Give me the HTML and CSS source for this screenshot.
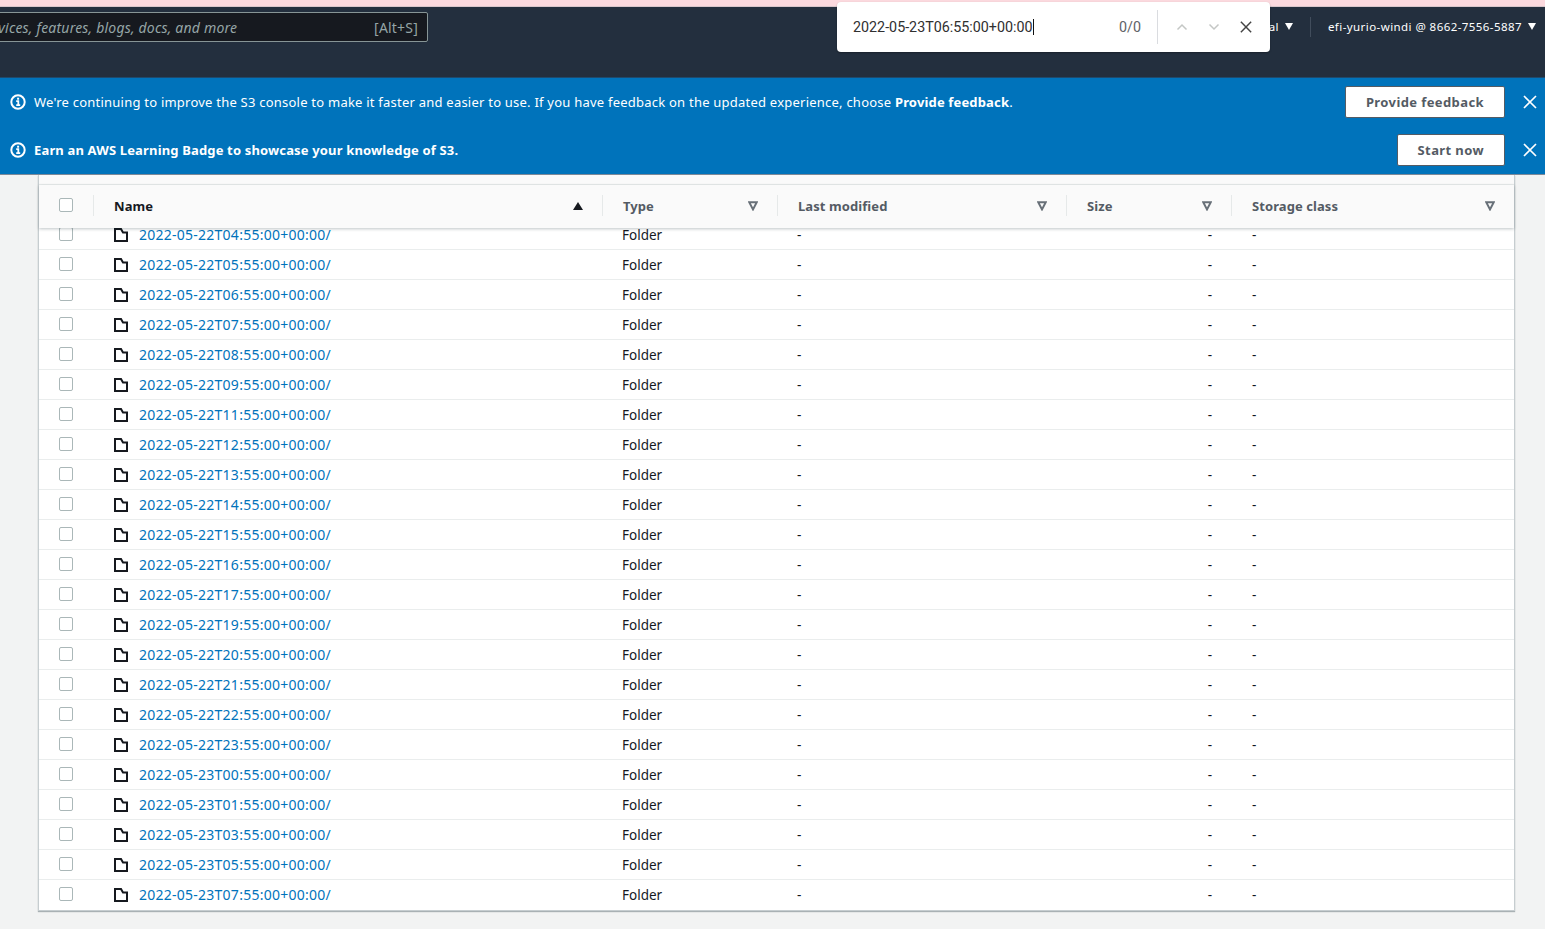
FILE: index.html
```html
<!DOCTYPE html>
<html lang="en">
<head>
<meta charset="utf-8">
<title>S3 bucket</title>
<link rel="stylesheet" href="styles.css">
</head>
<body>
<svg class="defs" width="0" height="0" aria-hidden="true">
  <symbol id="info" viewBox="0 0 16 16"><circle cx="8" cy="8" r="6.7" fill="none" stroke="currentColor" stroke-width="2"/><path d="M6.200 7.200h2.100v3.800M6.200 11.200h4" fill="none" stroke="currentColor" stroke-width="1.800"/><rect x="7.100" y="3.700" width="2" height="2" fill="currentColor"/></symbol>
  <symbol id="close" viewBox="0 0 14 14"><path d="M1 1l12 12M13 1L1 13" fill="none" stroke="currentColor" stroke-width="1.700"/></symbol>
  <symbol id="filter" viewBox="0 0 10 10"><path d="M1.200 1.200h7.600L5 8.400z" fill="none" stroke="currentColor" stroke-width="2"/></symbol>
  <symbol id="folder" viewBox="0 0 14 14"><path d="M1 1h6l2 3.500h4V13H1z" fill="none" stroke="currentColor" stroke-width="2"/></symbol>
</svg>
<div class="strip"></div>
<header class="nav">
  <div class="search"><span class="search-text">Search for services, features, blogs, docs, and more</span><span class="search-key">[Alt+S]</span></div>
  <div class="nav-right">
    <span class="nav-item">Global <i class="caret"></i></span>
    <span class="nav-sep"></span>
    <span class="nav-item">efi-yurio-windi @ 8662-7556-5887 <i class="caret"></i></span>
  </div>
</header>
<div class="findbar">
  <span class="find-input"><span class="find-text">2022-05-23T06:55:00+00:00</span></span>
  <span class="find-count">0/0</span>
  <span class="find-sep"></span>
  <svg class="find-arrow" width="12" height="8" viewBox="0 0 12 8"><path d="M1.500 6.500L6 2l4.500 4.500" fill="none" stroke="currentColor" stroke-width="1.500"/></svg>
  <svg class="find-arrow" width="12" height="8" viewBox="0 0 12 8"><path d="M1.500 1.500L6 6l4.500-4.500" fill="none" stroke="currentColor" stroke-width="1.500"/></svg>
  <svg class="find-close" width="12" height="12"><use href="#close"/></svg>
</div>
<section class="flash">
  <div class="flash-row">
    <svg class="flash-icon" width="16" height="16"><use href="#info"/></svg>
    <p class="flash-text">We're continuing to improve the S3 console to make it faster and easier to use. If you have feedback on the updated experience, choose <b>Provide feedback</b>.</p>
    <button class="flash-btn">Provide feedback</button>
    <svg class="flash-close" width="14" height="14"><use href="#close"/></svg>
  </div>
  <div class="flash-row">
    <svg class="flash-icon" width="16" height="16"><use href="#info"/></svg>
    <p class="flash-text"><b>Earn an AWS Learning Badge to showcase your knowledge of S3.</b></p>
    <button class="flash-btn">Start now</button>
    <svg class="flash-close" width="14" height="14"><use href="#close"/></svg>
  </div>
</section>
<main class="card">
  <div class="card-top"></div>
  <div class="thead cols">
    <div class="th th-check"><span class="box"></span></div>
    <div class="th"><span class="th-name">Name</span><i class="sort"></i></div>
    <div class="th"><span>Type</span><svg class="filter" width="10" height="10"><use href="#filter"/></svg></div>
    <div class="th"><span>Last modified</span><svg class="filter" width="10" height="10"><use href="#filter"/></svg></div>
    <div class="th"><span>Size</span><svg class="filter" width="10" height="10"><use href="#filter"/></svg></div>
    <div class="th th-last"><span>Storage class</span><svg class="filter" width="10" height="10"><use href="#filter"/></svg></div>
  </div>
  <div class="tr cols tr-first"><div class="td-check"><span class="box"></span></div><div class="td-name"><svg class="folder" width="14" height="14"><use href="#folder"/></svg><a class="link">2022-05-22T04:55:00+00:00/</a></div><div class="td">Folder</div><div class="td">-</div><div class="td td-size">-</div><div class="td td-class">-</div></div>
  <div class="tr cols"><div class="td-check"><span class="box"></span></div><div class="td-name"><svg class="folder" width="14" height="14"><use href="#folder"/></svg><a class="link">2022-05-22T05:55:00+00:00/</a></div><div class="td">Folder</div><div class="td">-</div><div class="td td-size">-</div><div class="td td-class">-</div></div>
  <div class="tr cols"><div class="td-check"><span class="box"></span></div><div class="td-name"><svg class="folder" width="14" height="14"><use href="#folder"/></svg><a class="link">2022-05-22T06:55:00+00:00/</a></div><div class="td">Folder</div><div class="td">-</div><div class="td td-size">-</div><div class="td td-class">-</div></div>
  <div class="tr cols"><div class="td-check"><span class="box"></span></div><div class="td-name"><svg class="folder" width="14" height="14"><use href="#folder"/></svg><a class="link">2022-05-22T07:55:00+00:00/</a></div><div class="td">Folder</div><div class="td">-</div><div class="td td-size">-</div><div class="td td-class">-</div></div>
  <div class="tr cols"><div class="td-check"><span class="box"></span></div><div class="td-name"><svg class="folder" width="14" height="14"><use href="#folder"/></svg><a class="link">2022-05-22T08:55:00+00:00/</a></div><div class="td">Folder</div><div class="td">-</div><div class="td td-size">-</div><div class="td td-class">-</div></div>
  <div class="tr cols"><div class="td-check"><span class="box"></span></div><div class="td-name"><svg class="folder" width="14" height="14"><use href="#folder"/></svg><a class="link">2022-05-22T09:55:00+00:00/</a></div><div class="td">Folder</div><div class="td">-</div><div class="td td-size">-</div><div class="td td-class">-</div></div>
  <div class="tr cols"><div class="td-check"><span class="box"></span></div><div class="td-name"><svg class="folder" width="14" height="14"><use href="#folder"/></svg><a class="link">2022-05-22T11:55:00+00:00/</a></div><div class="td">Folder</div><div class="td">-</div><div class="td td-size">-</div><div class="td td-class">-</div></div>
  <div class="tr cols"><div class="td-check"><span class="box"></span></div><div class="td-name"><svg class="folder" width="14" height="14"><use href="#folder"/></svg><a class="link">2022-05-22T12:55:00+00:00/</a></div><div class="td">Folder</div><div class="td">-</div><div class="td td-size">-</div><div class="td td-class">-</div></div>
  <div class="tr cols"><div class="td-check"><span class="box"></span></div><div class="td-name"><svg class="folder" width="14" height="14"><use href="#folder"/></svg><a class="link">2022-05-22T13:55:00+00:00/</a></div><div class="td">Folder</div><div class="td">-</div><div class="td td-size">-</div><div class="td td-class">-</div></div>
  <div class="tr cols"><div class="td-check"><span class="box"></span></div><div class="td-name"><svg class="folder" width="14" height="14"><use href="#folder"/></svg><a class="link">2022-05-22T14:55:00+00:00/</a></div><div class="td">Folder</div><div class="td">-</div><div class="td td-size">-</div><div class="td td-class">-</div></div>
  <div class="tr cols"><div class="td-check"><span class="box"></span></div><div class="td-name"><svg class="folder" width="14" height="14"><use href="#folder"/></svg><a class="link">2022-05-22T15:55:00+00:00/</a></div><div class="td">Folder</div><div class="td">-</div><div class="td td-size">-</div><div class="td td-class">-</div></div>
  <div class="tr cols"><div class="td-check"><span class="box"></span></div><div class="td-name"><svg class="folder" width="14" height="14"><use href="#folder"/></svg><a class="link">2022-05-22T16:55:00+00:00/</a></div><div class="td">Folder</div><div class="td">-</div><div class="td td-size">-</div><div class="td td-class">-</div></div>
  <div class="tr cols"><div class="td-check"><span class="box"></span></div><div class="td-name"><svg class="folder" width="14" height="14"><use href="#folder"/></svg><a class="link">2022-05-22T17:55:00+00:00/</a></div><div class="td">Folder</div><div class="td">-</div><div class="td td-size">-</div><div class="td td-class">-</div></div>
  <div class="tr cols"><div class="td-check"><span class="box"></span></div><div class="td-name"><svg class="folder" width="14" height="14"><use href="#folder"/></svg><a class="link">2022-05-22T19:55:00+00:00/</a></div><div class="td">Folder</div><div class="td">-</div><div class="td td-size">-</div><div class="td td-class">-</div></div>
  <div class="tr cols"><div class="td-check"><span class="box"></span></div><div class="td-name"><svg class="folder" width="14" height="14"><use href="#folder"/></svg><a class="link">2022-05-22T20:55:00+00:00/</a></div><div class="td">Folder</div><div class="td">-</div><div class="td td-size">-</div><div class="td td-class">-</div></div>
  <div class="tr cols"><div class="td-check"><span class="box"></span></div><div class="td-name"><svg class="folder" width="14" height="14"><use href="#folder"/></svg><a class="link">2022-05-22T21:55:00+00:00/</a></div><div class="td">Folder</div><div class="td">-</div><div class="td td-size">-</div><div class="td td-class">-</div></div>
  <div class="tr cols"><div class="td-check"><span class="box"></span></div><div class="td-name"><svg class="folder" width="14" height="14"><use href="#folder"/></svg><a class="link">2022-05-22T22:55:00+00:00/</a></div><div class="td">Folder</div><div class="td">-</div><div class="td td-size">-</div><div class="td td-class">-</div></div>
  <div class="tr cols"><div class="td-check"><span class="box"></span></div><div class="td-name"><svg class="folder" width="14" height="14"><use href="#folder"/></svg><a class="link">2022-05-22T23:55:00+00:00/</a></div><div class="td">Folder</div><div class="td">-</div><div class="td td-size">-</div><div class="td td-class">-</div></div>
  <div class="tr cols"><div class="td-check"><span class="box"></span></div><div class="td-name"><svg class="folder" width="14" height="14"><use href="#folder"/></svg><a class="link">2022-05-23T00:55:00+00:00/</a></div><div class="td">Folder</div><div class="td">-</div><div class="td td-size">-</div><div class="td td-class">-</div></div>
  <div class="tr cols"><div class="td-check"><span class="box"></span></div><div class="td-name"><svg class="folder" width="14" height="14"><use href="#folder"/></svg><a class="link">2022-05-23T01:55:00+00:00/</a></div><div class="td">Folder</div><div class="td">-</div><div class="td td-size">-</div><div class="td td-class">-</div></div>
  <div class="tr cols"><div class="td-check"><span class="box"></span></div><div class="td-name"><svg class="folder" width="14" height="14"><use href="#folder"/></svg><a class="link">2022-05-23T03:55:00+00:00/</a></div><div class="td">Folder</div><div class="td">-</div><div class="td td-size">-</div><div class="td td-class">-</div></div>
  <div class="tr cols"><div class="td-check"><span class="box"></span></div><div class="td-name"><svg class="folder" width="14" height="14"><use href="#folder"/></svg><a class="link">2022-05-23T05:55:00+00:00/</a></div><div class="td">Folder</div><div class="td">-</div><div class="td td-size">-</div><div class="td td-class">-</div></div>
  <div class="tr cols tr-last"><div class="td-check"><span class="box"></span></div><div class="td-name"><svg class="folder" width="14" height="14"><use href="#folder"/></svg><a class="link">2022-05-23T07:55:00+00:00/</a></div><div class="td">Folder</div><div class="td">-</div><div class="td td-size">-</div><div class="td td-class">-</div></div>
</main>
</body>
</html>
```
FILE: styles.css
```css
* { box-sizing: border-box; }
html, body { margin: 0; padding: 0; height: 929px; overflow: hidden; }
body { background: #f2f3f3; font-family: "Noto Sans", sans-serif; font-size: 13px; letter-spacing: .228px; color: #16191f; position: relative; }
.defs { position: absolute; }

.strip { height: 7px; background: #fbd9de; border-bottom: 1px solid #d9c6cb; }

.nav { height: 70px; background: #232f3e; display: flex; align-items: flex-start; justify-content: space-between; overflow: hidden; padding-top: 5px; }
.search { width: 529px; height: 30px; margin-left: -101px; background: #16191f; border: 1px solid #879596; border-radius: 2px; display: flex; align-items: center; justify-content: space-between; padding: 1px 9px 0 10px; color: #95a5a6; font-size: 14px; letter-spacing: .2px; }
.search-text { font-style: italic; white-space: nowrap; }
.nav-right { display: flex; align-items: center; height: 29px; color: #fff; font-size: 11.500px; letter-spacing: .43px; padding-right: 9px; }
.nav-item { white-space: nowrap; display: flex; align-items: center; gap: 6px; }
.nav-sep { width: 1px; height: 20px; background: #414d5c; margin: 0 17px; }
.caret { display: inline-block; width: 0; height: 0; border-left: 4px solid transparent; border-right: 4px solid transparent; border-top: 7px solid #fff; }

.findbar { position: absolute; left: 837px; top: 2px; width: 433px; height: 50px; background: #fff; border-radius: 4px; box-shadow: 0 1px 2px rgba(0,0,0,.3); display: flex; align-items: center; padding: 0 18px 0 16px; font-family: Roboto, sans-serif; font-size: 14.300px; letter-spacing: 0; color: #303030; }
.find-input { width: 266px; white-space: nowrap; }
.find-text { border-right: 1px solid #111; }
.find-count { color: #5f6368; width: 38px; }
.find-sep { width: 1px; height: 34px; background: #dadce0; margin: 0 18px 0 0; }
.find-arrow { color: #c4c7c5; margin-right: 20px; }
.find-close { color: #444; }

.flash { height: 98px; background: #0073bb; border-top: 1px solid #1f4a6d; border-bottom: 1px solid #7d8998; color: #fff; }
.flash-row { height: 48px; display: flex; align-items: center; padding: 0 8px 0 10px; }
.flash-icon { flex: none; margin-right: 8px; }
.flash-text { margin: 0; flex: 1; white-space: nowrap; }
.flash-text b { letter-spacing: .155px; }
.flash-btn { height: 32px; padding: 0 20px; background: #fff; border: 1px solid #545b64; border-radius: 2px; color: #545b64; font: 700 13px "Noto Sans", sans-serif; letter-spacing: .4px; }
.flash-close { flex: none; margin-left: 18px; }

.card { margin: 0 30.500px 0 38px; background: #fff; border: 1px solid #c6cdd0; border-top: 0; box-shadow: 0 1px 1px rgba(0,28,36,.3); height: 736px; }
.card-top { height: 10px; background: #fafafa; border-bottom: 1px solid #eaeded; }
.cols { display: grid; grid-template-columns: 55px 509px 175px 289px 165px 1fr; }
.thead { height: 43px; background: #fafafa; box-shadow: 0 1px 3px rgba(0,28,36,.25); position: relative; z-index: 1; }
.th { position: relative; display: flex; align-items: center; justify-content: space-between; padding: 0 20px 1px; font-weight: 700; letter-spacing: .08px; color: #545b64; height: 43px; }
.th::before { content: ""; position: absolute; left: -1px; top: 10px; height: 21px; width: 1px; background: #e6e9e9; }
.th-check { padding: 0 0 3px 20px; justify-content: flex-start; }
.th-check::before { display: none; }
.th-last { padding-right: 19px; }
.th-name { color: #16191f; }
.sort { width: 0; height: 0; border-left: 5px solid transparent; border-right: 5px solid transparent; border-bottom: 8px solid #16191f; }
.filter { color: #687078; }

.tr { height: 30px; border-bottom: 1px solid #eaeded; align-items: center; }
.tr-first { margin-top: -8px; }
.tr-last { border-bottom-color: transparent; }
.box { display: block; width: 14px; height: 14px; border: 1px solid #aab7b8; border-radius: 2px; background: #fff; }
.td-check { padding: 0 0 2px 20px; }
.td-name { display: flex; align-items: center; padding-left: 20px; white-space: nowrap; }
.folder { flex: none; color: #16191f; margin-right: 11px; }
.link { color: #0073bb; font-size: 14px; letter-spacing: .25px; }
.td { padding-left: 19px; font-size: 13.500px; letter-spacing: 0; }
.td-size { text-align: right; padding-right: 20px; }
.td-class { padding-left: 20px; }
```
